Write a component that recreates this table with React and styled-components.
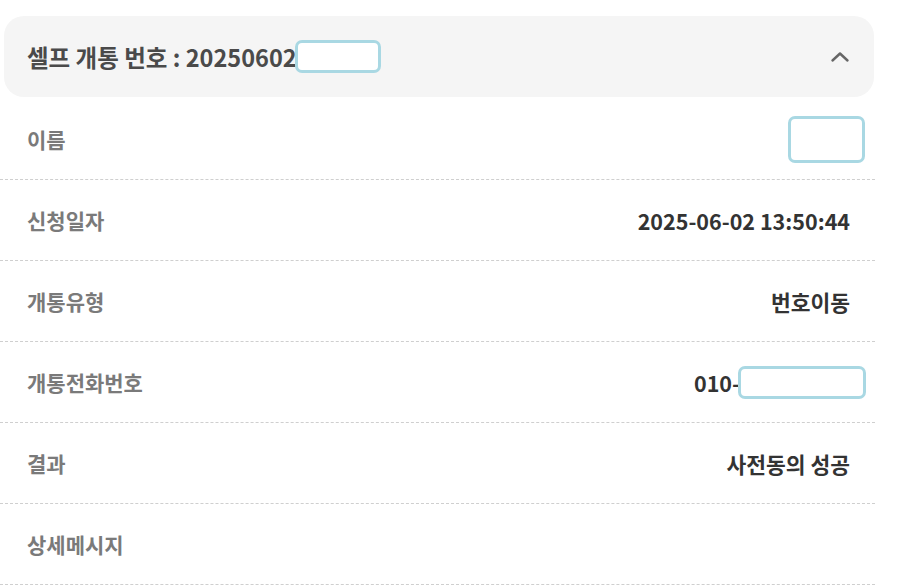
import React from "react";
import styled, { createGlobalStyle } from "styled-components";

const Global = createGlobalStyle`
  html, body { margin: 0; padding: 0; background: #fff; }
  body { font-family: "Noto Sans CJK KR", "Noto Sans", sans-serif; }
`;

const Page = styled.div`
  width: 875px;
  padding-top: 16px;
`;

const Header = styled.div`
  margin-left: 4px;
  width: 870px;
  height: 81px;
  box-sizing: border-box;
  background: #f5f5f5;
  border-radius: 20px;
  display: flex;
  align-items: center;
  justify-content: space-between;
  padding: 0 24px 0 23px;
`;

const Title = styled.h2`
  margin: 0;
  font-size: 23.5px;
  font-weight: 700;
  color: #4a4a4a;
  display: flex;
  align-items: center;
`;

const Redact = styled.span`
  display: inline-block;
  box-sizing: border-box;
  width: ${(p) => p.$w}px;
  height: ${(p) => p.$h}px;
  border: 3px solid #a9d8e3;
  border-radius: 7px;
  background: #fff;
  margin-right: ${(p) => p.$mr || 0}px;
  margin-left: ${(p) => p.$ml || 0}px;
  vertical-align: middle;
`;

const List = styled.dl`
  margin: 0;
  padding-top: 2px;
`;

const Row = styled.div`
  display: flex;
  align-items: center;
  justify-content: space-between;
  height: 80px;
  padding: 0 25px 0 27px;
  border-bottom: 1px dashed #cfcfcf;
`;

const Label = styled.dt`
  margin: 0;
  font-size: 21px;
  font-weight: 700;
  color: #7a7a7a;
`;

const Value = styled.dd`
  margin: 0;
  font-size: 21.5px;
  font-weight: 700;
  color: #333;
  display: flex;
  align-items: center;
`;

const Chevron = () => (
  <svg width="20" height="12" viewBox="0 0 20 12" fill="none">
    <path d="M2.5 9.5 L10 2.5 L17.5 9.5" stroke="#666" strokeWidth="2.4" strokeLinecap="round" strokeLinejoin="round" />
  </svg>
);

export default function App() {
  return (
    <Page>
      <Global />
      <Header>
        <Title>
          셀프 개통 번호 : 20250602
          <Redact $w={86} $h={33} $ml={-2} />
        </Title>
        <Chevron />
      </Header>
      <List>
        <Row>
          <Label>이름</Label>
          <Value>
            <Redact $w={77} $h={47} $mr={-15} />
          </Value>
        </Row>
        <Row>
          <Label>신청일자</Label>
          <Value>2025-06-02 13:50:44</Value>
        </Row>
        <Row>
          <Label>개통유형</Label>
          <Value>번호이동</Value>
        </Row>
        <Row>
          <Label>개통전화번호</Label>
          <Value>
            010-
            <Redact $w={128} $h={33} $mr={-16} $ml={-2} />
          </Value>
        </Row>
        <Row>
          <Label>결과</Label>
          <Value>사전동의 성공</Value>
        </Row>
        <Row>
          <Label>상세메시지</Label>
          <Value></Value>
        </Row>
      </List>
    </Page>
  );
}
